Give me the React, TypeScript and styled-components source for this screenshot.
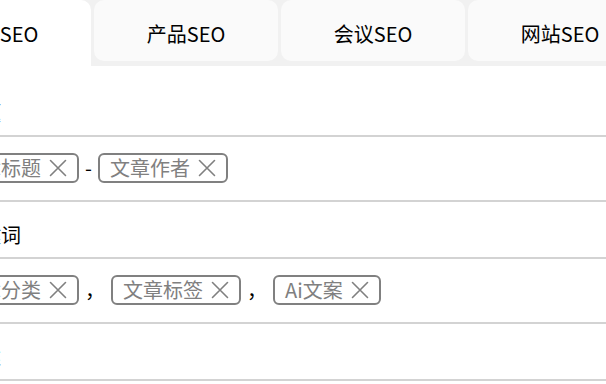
import React from 'react'
import styled, { createGlobalStyle } from 'styled-components'

const GlobalStyle = createGlobalStyle`
    html, body {
        margin: 0;
        padding: 0;
        background: #ffffff;
        overflow: hidden;
    }
    body {
        font-family: "Noto Sans CJK SC", "Noto Sans", sans-serif;
        color: #000;
    }
`

interface TagItem {
    text: string;
}

interface FieldRow {
    label: string;
    tags: TagItem[];
    separator: string;
}

const tabs = ['文章SEO', '产品SEO', '会议SEO', '网站SEO']

const fields: FieldRow[] = [
    { label: '标题', tags: [{ text: '文章标题' }, { text: '文章作者' }], separator: '-' },
    { label: '关键词', tags: [{ text: '文章分类' }, { text: '文章标签' }, { text: 'Ai文案' }], separator: '，' },
    { label: '描述', tags: [], separator: '' },
]

// small thin cross used to remove a tag
const CloseMark: React.FC = () => (
    <svg width="18" height="18" viewBox="0 0 18 18" fill="none">
        <path d="M1.5 1.5 L16.5 16.5 M16.5 1.5 L1.5 16.5" stroke="#808080" strokeWidth="1.6" strokeLinecap="round" />
    </svg>
)

export default function App() {
    return (
        <>
            <GlobalStyle />
            <Page>
                <TabBar>
                    {tabs.map((t, i) => (
                        <Tab key={t} active={i === 0}>{t}</Tab>
                    ))}
                </TabBar>
                <Content>
                    {fields.map(f => (
                        <React.Fragment key={f.label}>
                            <LabelRow>{f.label}</LabelRow>
                            {f.tags.length > 0 && (
                                <TagRow>
                                    {f.tags.map((tag, i) => (
                                        <React.Fragment key={tag.text}>
                                            {i > 0 && <Separator>{f.separator}</Separator>}
                                            <Tag>
                                                <span>{tag.text}</span>
                                                <CloseMark />
                                            </Tag>
                                        </React.Fragment>
                                    ))}
                                </TagRow>
                            )}
                        </React.Fragment>
                    ))}
                </Content>
            </Page>
        </>
    )
}

const Page = styled.div`
    width: 760px;
    margin-left: -93px;
`

const TabBar = styled.div`
    display: flex;
    gap: 3px;
    align-items: flex-start;
    background-color: #f1f1f1;
    height: 66px;
`

const Tab = styled.div<{ active?: boolean }>`
    flex: 0 0 184px;
    height: ${p => (p.active ? '66px' : '61px')};
    box-sizing: border-box;
    padding-top: 6px;
    padding-bottom: ${p => (p.active ? '5px' : '0')};
    display: flex;
    align-items: center;
    justify-content: center;
    font-size: 20px;
    color: #000;
    background-color: ${p => (p.active ? '#ffffff' : '#fafafa')};
    border-radius: ${p => (p.active ? '10px 10px 0 0' : '10px')};
`

const Content = styled.div`
    padding: 14px 0 0 42px;
`

const LabelRow = styled.div`
    padding: 19px 0 8px 12px;
    font-size: 20px;
    line-height: 28px;
    border-bottom: 2px solid #d3d3d3;
`

const TagRow = styled.div`
    display: flex;
    align-items: center;
    gap: 6px;
    padding: 16px 0 17px;
    border-bottom: 2px solid #d3d3d3;
`

const Tag = styled.div`
    display: inline-flex;
    align-items: center;
    gap: 8px;
    height: 30px;
    box-sizing: border-box;
    padding: 0 10px;
    border: 2px solid #808080;
    border-radius: 6px;
    font-size: 20px;
    line-height: 26px;
    color: #808080;
`

const Separator = styled.span`
    font-size: 20px;
    line-height: 26px;
    color: #000;
`
